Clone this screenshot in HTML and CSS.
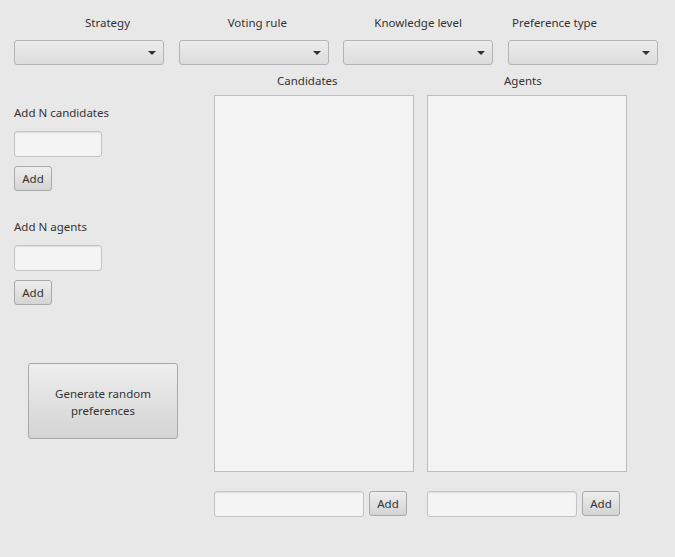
FILE: index.html
```html
<!DOCTYPE html>
<html>
<head>
<meta charset="utf-8">
<link rel="stylesheet" href="styles.css">
</head>
<body>
<div class="app">
  <div class="top">
    <div class="lbl lbl-1">Strategy</div>
    <div class="lbl lbl-2">Voting rule</div>
    <div class="lbl lbl-3">Knowledge level</div>
    <div class="lbl lbl-4">Preference type</div>
    <div class="combo"><span class="arrow"></span></div>
    <div class="combo"><span class="arrow"></span></div>
    <div class="combo"><span class="arrow"></span></div>
    <div class="combo"><span class="arrow"></span></div>
  </div>
  <div class="main">
    <div class="left">
      <div class="text first">Add N candidates</div>
      <div class="field small"></div>
      <button class="btn add">Add</button>
      <div class="text second">Add N agents</div>
      <div class="field small"></div>
      <button class="btn add">Add</button>
      <button class="btn gen">Generate random<br>preferences</button>
    </div>
    <div class="col">
      <div class="col-title cand">Candidates</div>
      <div class="list"></div>
      <div class="bottom">
        <div class="field wide"></div>
        <button class="btn add">Add</button>
      </div>
    </div>
    <div class="col">
      <div class="col-title agents">Agents</div>
      <div class="list"></div>
      <div class="bottom">
        <div class="field wide"></div>
        <button class="btn add">Add</button>
      </div>
    </div>
  </div>
</div>
</body>
</html>
```

FILE: styles.css
```css
html, body {
  margin: 0;
  padding: 0;
  background: #e8e8e8;
  width: 675px;
  height: 557px;
  overflow: hidden;
}
body {
  font-family: "Noto Sans", "Open Sans", sans-serif;
  font-size: 11.5px;
  color: #333333;
}
.app {
  padding: 15px 0 0 14px;
}
.top {
  display: grid;
  grid-template-columns: repeat(4, 150px);
  column-gap: 14.67px;
  row-gap: 9px;
}
.lbl {
  height: 16px;
  line-height: 16px;
  white-space: nowrap;
}
.lbl-1 { padding-left: 71px; }
.lbl-2 { padding-left: 49px; }
.lbl-3 { padding-left: 31px; }
.lbl-4 { padding-left: 4px; }
.combo {
  position: relative;
  box-sizing: border-box;
  height: 25px;
  border: 1px solid #b4b4b4;
  border-radius: 3px;
  background: linear-gradient(#ececec, #dcdcdc);
}
.arrow {
  position: absolute;
  right: 7px;
  top: 10px;
  width: 0;
  height: 0;
  border-left: 4px solid transparent;
  border-right: 4px solid transparent;
  border-top: 4px solid #333333;
}
.main {
  display: flex;
  margin-top: 8px;
}
.left {
  width: 200px;
  display: flex;
  flex-direction: column;
  align-items: flex-start;
}
.text {
  height: 16px;
  line-height: 16px;
  white-space: nowrap;
}
.text.first { margin-top: 32px; }
.text.second { margin-top: 28px; }
.field {
  box-sizing: border-box;
  height: 26px;
  border: 1px solid #c4c4c4;
  border-radius: 3px;
  background: #f4f4f4;
  box-shadow: inset 0 1px 1px #dedede;
}
.field.small {
  width: 88px;
  margin-top: 10px;
}
.field.wide {
  width: 150px;
}
.btn {
  box-sizing: border-box;
  font-family: inherit;
  font-size: 11.5px;
  color: #333333;
  border: 1px solid #a9a9a9;
  border-radius: 3px;
  background: linear-gradient(#eeeeee, #d4d4d4);
  padding: 0;
  margin: 0;
}
.btn.add {
  width: 38px;
  height: 25px;
  line-height: 23px;
}
.left .btn.add { margin-top: 9px; }
.btn.gen {
  width: 150px;
  height: 76px;
  margin-top: 58px;
  margin-left: 14px;
  line-height: 17px;
  padding-top: 2px;
}
.col {
  width: 200px;
  display: flex;
  flex-direction: column;
}
.col + .col {
  margin-left: 13px;
}
.col-title {
  height: 16px;
  line-height: 16px;
  margin-bottom: 6px;
  white-space: nowrap;
}
.col-title.cand { padding-left: 63px; }
.col-title.agents { padding-left: 77px; }
.list {
  box-sizing: border-box;
  height: 377px;
  border: 1px solid #bdbdbd;
  background: #f3f3f3;
}
.bottom {
  display: flex;
  align-items: flex-start;
  gap: 5px;
  margin-top: 19px;
}
```
